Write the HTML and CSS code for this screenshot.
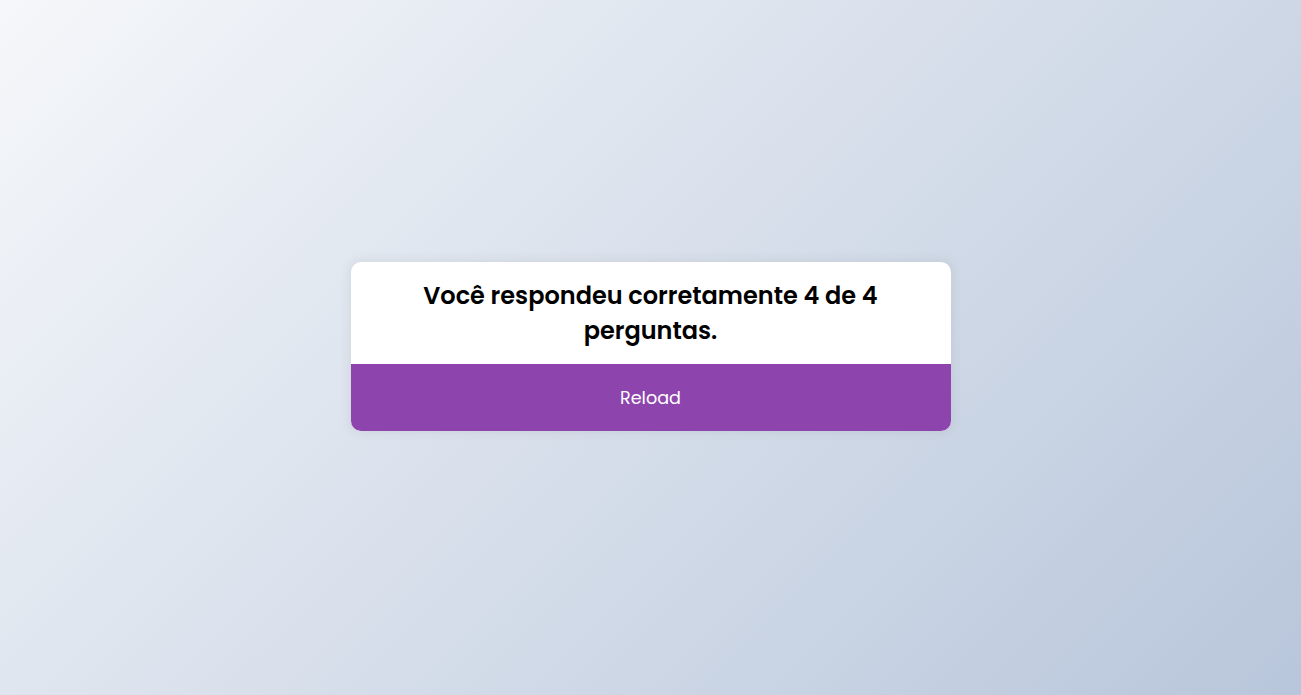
FILE: index.html
```html
<!DOCTYPE html>
<html lang="pt">
<head>
<meta charset="utf-8">
<title>Quiz</title>
<link rel="stylesheet" href="styles.css">
</head>
<body>
<div class="quiz-container">
  <div class="quiz-header">
    <h2 class="result">Você respondeu corretamente 4 de 4 perguntas.</h2>
  </div>
  <button class="reload">Reload</button>
</div>
</body>
</html>
```
FILE: styles.css
```css
* { box-sizing: border-box; }
html, body { height: 100%; }
body {
  margin: 0;
  padding-bottom: 2px;
  font-family: "Poppins", "Inter", "Noto Sans", sans-serif;
  background-color: #b8c6db;
  background-image: linear-gradient(315deg, #b8c6db 0%, #f5f7fa 100%);
  display: flex;
  align-items: center;
  justify-content: center;
}
.quiz-container {
  width: 600px;
  background: #fff;
  border-radius: 10px;
  box-shadow: 0 0 10px 2px rgba(100, 100, 100, 0.1);
  overflow: hidden;
}
.quiz-header { padding: 0; }
.result {
  margin: 0;
  padding: 16px 60px;
  text-align: center;
  font-size: 24px;
  line-height: 35px;
  font-weight: 600;
  color: #000;
}
.reload {
  display: block;
  width: 100%;
  height: 67px;
  border: none;
  background: #8e44ad;
  color: #fff;
  font-family: inherit;
  font-size: 17.6px;
  padding: 0;
  cursor: pointer;
}
```
